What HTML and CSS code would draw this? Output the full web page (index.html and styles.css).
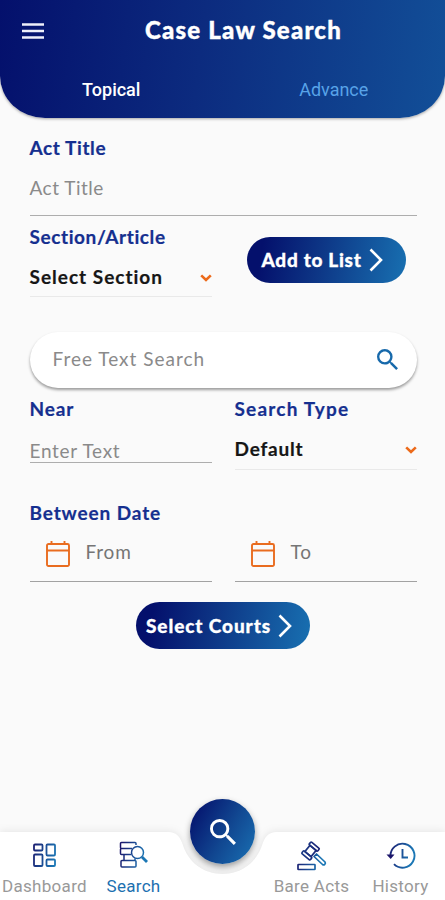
FILE: index.html
```html
<!DOCTYPE html>
<html lang="en">
<head>
<meta charset="utf-8">
<meta name="viewport" content="width=device-width, initial-scale=1">
<title>Case Law Search</title>
<link rel="stylesheet" href="styles.css">
</head>
<body>
<div class="app">
  <header class="header">
    <div class="topbar">
      <svg class="menu" viewBox="0 0 22 16"><path d="M0 1.500h22M0 8h22M0 14.500h22" stroke="#eef0fa" stroke-width="2.300"/></svg>
      <h1 class="title">Case Law Search</h1>
    </div>
    <nav class="tabs"><span class="tab tab-on">Topical</span><span class="tab">Advance</span></nav>
  </header>
  <main class="form">
    <label class="label act-label">Act Title</label>
    <div class="field field-act ph">Act Title</div>
    <div class="row row-section">
      <div class="col">
        <label class="label section-label">Section/Article</label>
        <div class="select select-section"><span>Select Section</span><svg class="chev" viewBox="0 0 12 8"><path d="M1.200 1.400 6 6l4.800-4.600" fill="none" stroke="#ec6a1a" stroke-width="2.600"/></svg></div>
      </div>
      <button class="btn btn-add"><span>Add to List</span><svg class="arrow" viewBox="0 0 14 24"><path d="M1.500 1.500 12 12 1.500 22.500" fill="none" stroke="#fff" stroke-width="2.600"/></svg></button>
    </div>
    <div class="search"><span class="ph">Free Text Search</span><svg class="glass" viewBox="3 3 17.500 17.500"><path fill="#1769ab" d="M15.500 14h-.79l-.28-.27A6.470 6.470 0 0 0 16 9.500 6.500 6.500 0 1 0 9.500 16c1.610 0 3.090-.59 4.230-1.570l.27.28v.79l5 4.990L20.490 19l-4.990-5zm-6 0C7.010 14 5 11.990 5 9.500S7.010 5 9.500 5 14 7.010 14 9.500 11.990 14 9.500 14z"/></svg></div>
    <div class="row row-near">
      <div class="col">
        <label class="label near-label">Near</label>
        <div class="field field-near ph">Enter Text</div>
      </div>
      <div class="col">
        <label class="label type-label">Search Type</label>
        <div class="select select-type"><span>Default</span><svg class="chev" viewBox="0 0 12 8"><path d="M1.200 1.400 6 6l4.800-4.600" fill="none" stroke="#ec6a1a" stroke-width="2.600"/></svg></div>
      </div>
    </div>
    <label class="label date-label">Between Date</label>
    <div class="row">
      <div class="date"><svg class="cal" viewBox="0 0 24 26"><path d="M2.500 3h19A1.500 1.500 0 0 1 23 4.500v19a1.500 1.500 0 0 1-1.500 1.500h-19A1.500 1.500 0 0 1 1 23.500v-19A1.500 1.500 0 0 1 2.500 3zM1 9.500h22M5.500 0v4M18.500 0v4" fill="none" stroke="#e96c1f" stroke-width="1.900"/></svg><span class="ph">From</span></div>
      <div class="date"><svg class="cal" viewBox="0 0 24 26"><path d="M2.500 3h19A1.500 1.500 0 0 1 23 4.500v19a1.500 1.500 0 0 1-1.500 1.500h-19A1.500 1.500 0 0 1 1 23.500v-19A1.500 1.500 0 0 1 2.500 3zM1 9.500h22M5.500 0v4M18.500 0v4" fill="none" stroke="#e96c1f" stroke-width="1.900"/></svg><span class="ph">To</span></div>
    </div>
    <button class="btn btn-courts"><span>Select Courts</span><svg class="arrow" viewBox="0 0 14 24"><path d="M1.500 1.500 12 12 1.500 22.500" fill="none" stroke="#fff" stroke-width="2.600"/></svg></button>
  </main>
  <footer class="bottom">
    <svg class="bar" viewBox="0 0 445 68"><path d="M0 0H168C177 0 180 5 182.500 12C188 30 203 42 222.500 42S257 30 262.500 12C265 5 268 0 277 0H445V68H0Z" fill="#fff"/></svg>
    <svg class="defs" width="0" height="0"><defs><linearGradient id="ink" gradientUnits="userSpaceOnUse" x1="2" y1="0" x2="28" y2="6"><stop offset="0" stop-color="#1b1469"/><stop offset="1" stop-color="#1b77b5"/></linearGradient><linearGradient id="ink-gavel" gradientUnits="userSpaceOnUse" x1="-8" y1="-4" x2="4" y2="12"><stop offset="0" stop-color="#1b3a86"/><stop offset="1" stop-color="#1b1f72"/></linearGradient></defs></svg>
    <nav class="items">
      <div class="item"><svg class="icon" viewBox="0 0 30 30"><g fill="none" stroke="url(#ink)" stroke-width="1.800"><rect x="4" y="3.500" width="8.500" height="6" rx="1"/><rect x="4" y="13.500" width="8.500" height="11.500" rx="1"/><rect x="16.500" y="3.500" width="8.500" height="11" rx="1"/><rect x="16.500" y="18.500" width="8.500" height="6.500" rx="1"/></g></svg><span>Dashboard</span></div>
      <div class="item item-on"><svg class="icon" viewBox="0 0 30 30"><g fill="none" stroke="url(#ink)" stroke-width="1.500"><path d="M13 7.500H2.500a1 1 0 0 1-1-1V2.500a1 1 0 0 1 1-1H16a1 1 0 0 1 1 1v1.500M12 13.500H2.500a1 1 0 0 1-1-1v-4a1 1 0 0 1 1-1M16 19.500H6a1 1 0 0 1-1-1v-5M16 19.500v-2M3 19.500h13a1 1 0 0 1 1 1V25a1 1 0 0 1-1 1H3a1 1 0 0 1-1-1v-4.500a1 1 0 0 1 1-1z"/><circle cx="18.500" cy="11.500" r="6"/><path d="m23 16 5 5" stroke-width="2.800"/></g></svg><span>Search</span></div>
      <div class="item"></div>
      <div class="item"><svg class="icon" viewBox="0 0 30 30"><g fill="none" stroke="url(#ink)" stroke-width="1.700" stroke-linejoin="round"><rect x="1" y="23.500" width="17" height="5" rx=".5"/><g transform="translate(13.500 10) rotate(-50)" stroke="url(#ink-gavel)"><rect x="-4" y="-4" width="8" height="8"/><rect x="-7.500" y="-5.500" width="3.500" height="11" rx="1"/><rect x="4" y="-5.500" width="3.500" height="11" rx="1"/></g><path d="m17 15.500 2.500-2.500 8.500 8a1.800 1.800 0 0 1-2.500 2.500z"/></g></svg><span>Bare Acts</span></div>
      <div class="item"><svg class="icon" viewBox="0 0 30 30"><g fill="none" stroke="url(#ink)" stroke-width="1.900"><path d="M4.500 15.500A12 12 0 1 1 8 23.200M16.500 8v8.500h5.500"/></g><path d="M.5 13.500h8L4.700 18z" fill="#1b1469"/></svg><span>History</span></div>
    </nav>
    <button class="fab" aria-label="Search"><svg viewBox="3 3 17.500 17.500"><path fill="#fff" d="M15.500 14h-.79l-.28-.27A6.470 6.470 0 0 0 16 9.500 6.500 6.500 0 1 0 9.500 16c1.610 0 3.090-.59 4.230-1.570l.27.28v.79l5 4.990L20.490 19l-4.990-5zm-6 0C7.010 14 5 11.990 5 9.500S7.010 5 9.500 5 14 7.010 14 9.500 11.990 14 9.500 14z"/></svg></button>
  </footer>
</div>
</body>
</html>
```
FILE: styles.css
```css
* { box-sizing: border-box; }
body { margin: 0; font-family: Lato, "Liberation Sans", sans-serif; font-size: 19px; line-height: 24px; background: #fafafa; }
svg { display: block; flex: none; }
.app { display: flex; flex-direction: column; width: 445px; height: 900px; overflow: hidden; }

.header { height: 118px; border-radius: 0 0 45px 45px / 0 0 42px 42px; background: linear-gradient(97deg, #04106c, #0c2b7f 45%, #124f98); box-shadow: 0 1px 3px rgba(0, 0, 0, .35); }
.topbar { display: flex; height: 60px; align-items: center; gap: 101px; padding-left: 22px; }
.menu { width: 22px; height: 16px; margin-top: 2px; }
.title { margin: 0; color: #fff; font-size: 24px; line-height: 30px; font-weight: 900; letter-spacing: 1.2px; white-space: nowrap; -webkit-text-stroke: .4px #fff; }
.tabs { display: grid; grid-template-columns: 1fr 1fr; padding-top: 18px; text-align: center; font: 400 18px/24px Roboto, sans-serif; color: #58a3e8; }
.tab-on { color: #fff; font-weight: 500; }

.form { flex: 1; display: flex; flex-direction: column; padding: 18px 28.5px 0 29.5px; }
.label { display: block; height: 24px; font-weight: 700; color: #152f8f; -webkit-text-stroke: .2px #152f8f; }
.act-label, .section-label { letter-spacing: .6px; }
.near-label { letter-spacing: .9px; }
.type-label { letter-spacing: 1.2px; }
.date-label { margin-top: 31px; letter-spacing: .87px; }
.ph { color: #8a8a8a; }
.field { border-bottom: 1px solid #adadad; }
.field-act { height: 56px; padding-top: 16px; letter-spacing: .5px; }
.field-near { height: 42px; padding-top: 18px; letter-spacing: .7px; }
.row { display: grid; grid-template-columns: 182px 182px; column-gap: 23px; }
.row-section, .row-near { padding-top: 9px; }
.select { display: flex; justify-content: space-between; padding-top: 16px; border-bottom: 1px solid #e9e9e9; font-weight: 700; color: #161616; -webkit-text-stroke: .2px #161616; }
.select-section { height: 48px; letter-spacing: 1px; }
.select-type { height: 49px; letter-spacing: .8px; }
.chev { width: 12px; height: 8px; margin-top: 9px; }

.btn { display: flex; align-items: center; border: 0; border-radius: 24px; color: #fff; font: 900 19px/24px Lato, "Liberation Sans", sans-serif; -webkit-text-stroke: .3px #fff; background: linear-gradient(100deg, #04106c 10%, #0d3585 45%, #1870b1); }
.btn-add { width: 159px; height: 46px; margin: 12px 0 0 12px; padding: 0 0 0 15px; gap: 7px; letter-spacing: .7px; }
.btn-courts { align-self: center; width: 174px; height: 47px; margin-top: 20px; padding: 0 0 0 10px; gap: 7px; letter-spacing: .9px; }
.arrow { width: 14px; height: 24px; }
.search { display: flex; justify-content: space-between; align-items: center; height: 56px; margin-top: 35px; padding: 0 19px 3px 23px; border-radius: 28px; background: #fff; box-shadow: 0 2px 3px rgba(0, 0, 0, .38); letter-spacing: 1px; }
.glass { width: 21px; height: 21px; margin-top: 2px; }
.date { display: flex; height: 57px; padding: 15px 0 0 16px; gap: 16px; border-bottom: 1px solid #a2a2a2; letter-spacing: .8px; }
.date .ph { color: #757575; margin-top: -.5px; }
.cal { width: 24px; height: 26px; margin-top: 1px; }

.bottom { position: relative; height: 68px; }
.bar { position: absolute; inset: 0; width: 445px; height: 68px; overflow: visible; filter: drop-shadow(0 0 4px rgba(0, 0, 0, .1)); }
.defs { position: absolute; }
.items { position: relative; display: grid; grid-template-columns: repeat(5, 89px); padding-top: 9px; font: 400 17px/24px Roboto, sans-serif; color: #999; }
.item { display: flex; flex-direction: column; align-items: center; gap: 3px; white-space: nowrap; letter-spacing: .3px; }
.item-on { color: #1c70b0; }
.icon { width: 30px; height: 30px; }
.fab { position: absolute; left: 190px; top: -33px; width: 65px; height: 65px; padding: 0; display: grid; place-items: center; border: 0; border-radius: 50%; background: linear-gradient(120deg, #05156f 10%, #114791 55%, #1a72b4); box-shadow: 0 3px 6px rgba(0, 0, 0, .38); }
.fab svg { width: 26px; height: 26px; }
```
